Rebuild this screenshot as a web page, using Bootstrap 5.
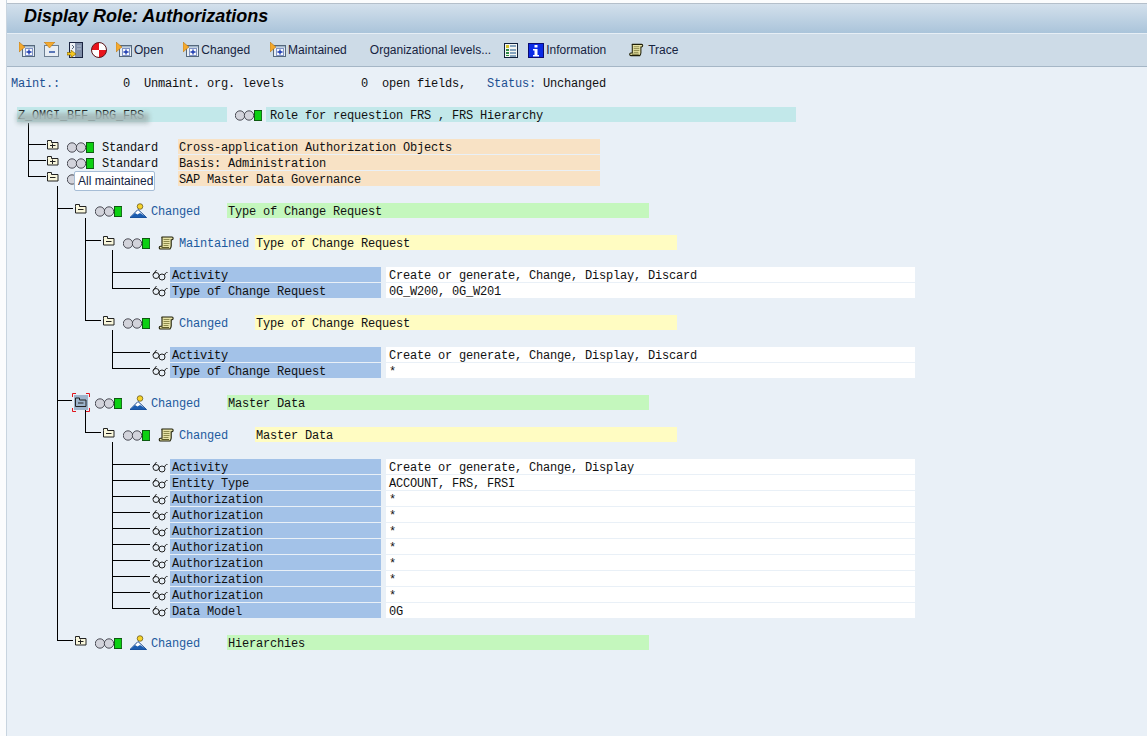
<!DOCTYPE html>
<html lang="en">
<head>
    <meta charset="UTF-8">
    <title>Display Role: Authorizations</title>
    <link href="https://cdn.jsdelivr.net/npm/bootstrap@5.3.0/dist/css/bootstrap.min.css" rel="stylesheet">
    <style>
        html, body { height: 100%; }
        body {
            background: linear-gradient(90deg, #fbfcfd 6px, #c8d4df 6px, #c8d4df 7px, #e9f0f7 7px);
            overflow: hidden;
            color: #111;
        }
        .sap-top { height: 3px; margin-left: 7px; border-bottom: 1px solid #b4bfca; background: #fbfcfd; box-sizing: content-box; }
        .sap-title {
            margin-left: 7px; height: 30px; padding-left: 17px;
            background: linear-gradient(180deg, #d3e0ec 0%, #aac4da 100%);
            border-bottom: 1px solid #e6eef5;
            font: italic bold 18px "Liberation Sans", Arial, sans-serif;
            color: #000; line-height: 25px;
        }
        .sap-toolbar {
            margin-left: 7px; height: 33px; padding-left: 12px;
            background: #cddbe7; border-bottom: 1px solid #a5b6c6;
            font: 12px "Liberation Sans", Arial, sans-serif; color: #16233f;
        }
        .tb-item { display: flex; align-items: center; }
        .tb-23 { margin-left: 23px; }
        .tb-20 { margin-left: 20px; }
        .tb-13 { margin-left: 13px; }
        .tb-10 { margin-left: 10px; }
        .tb-9 { margin-left: 9px; }
        .tb-8 { margin-left: 8px; }
        .tb-7 { margin-left: 7px; }
        .tb-text { margin-left: 1px; }
        .tb-text-wide { margin-left: 2px; }
        .sap-list, .sap-tree { font: 12px/19px "Liberation Mono", "Courier New", monospace; letter-spacing: -.2px; color: #111; }
        .sap-status { height: 16px; margin: 8px 0 16px 11px; white-space: pre; }
        .txt-blue { color: #1d4f91; }
        .sap-tree { position: relative; }
        .tree-lines { position: absolute; left: 0; top: 0; pointer-events: none; }
        .tree-row { display: flex; height: 16px; position: relative; white-space: pre; }
        .tree-gap { height: 16px; }
        .ind-root { margin-left: 17px; }
        .ind-0 { margin-left: 46px; }
        .ind-1 { margin-left: 74px; }
        .ind-2 { margin-left: 102px; }
        .ind-3 { margin-left: 150px; }
        .cell-folder { width: 21px; height: 15px; position: relative; flex: none; }
        .cell-folder svg { display: block; }
        .cell-lights { width: 27px; flex: none; margin-top: 3px; }
        .cell-node { width: 17px; margin-left: 8px; flex: none; }
        .cell-scroll { width: 17px; margin-left: 8px; margin-top: 1px; flex: none; }
        .cell-label { width: 76px; margin-left: 4px; flex: none; }
        .cell-label-wide { width: 76px; margin-left: 8px; flex: none; }
        .cell-glass { width: 20px; margin-top: 2px; flex: none; }
        .bar-desc { width: 422px; height: 15px; flex: none; padding-left: 1px; line-height: 19px; overflow: hidden; }
        .bar-root { width: 210px; height: 15px; flex: none; padding-left: 1px; background: #c2e8ea; overflow: hidden; }
        .bar-role { width: 530px; height: 15px; margin-left: 4px; padding-left: 4px; background: #c2e8ea; overflow: hidden; }
        .lights-root { margin-left: 8px; margin-top: 3px; flex: none; }
        .bg-peach { background: #f8e2c5; }
        .bg-lime { background: #c4f7bd; }
        .bg-cream { background: #fffcc2; }
        .fld-name { width: 211px; height: 15px; flex: none; padding-left: 2px; background: #a3c2e8; overflow: hidden; }
        .fld-value { width: 529px; height: 15px; flex: none; margin-left: 5px; padding-left: 3px; background: #fff; overflow: hidden; }
        .node-blue { color: #1d5a9e; }
        .folder-sel { position: absolute; left: -2px; top: -2px; }
        .blur-band {
            position: absolute; left: 17px; top: 6px; width: 132px; height: 10px;
            background: #a5b8b8; filter: blur(2.5px); opacity: .95;
        }
        .sap-tip {
            position: absolute; left: 74px; top: 64px; height: 20px; padding: 0 1px 0 3px;
            background: #fff; border: 1px solid #a6bdd6; border-radius: 2px;
            font: 12px/18px "Liberation Sans", Arial, sans-serif; letter-spacing: 0; color: #16233f;
        }
    </style>
</head>
<body>

<svg width="0" height="0" class="position-absolute">
    <defs>
        <symbol id="i-open" viewBox="0 0 17 16">
            <rect x="3.500" y="3.500" width="12" height="11" fill="#e8eef4" stroke="#55687c"/>
            <rect x="4" y="4" width="11" height="1.500" fill="#9fb4c9"/>
            <rect x="6.500" y="6.500" width="7" height="7" fill="#f6f8fb" stroke="#7f93c4"/>
            <path d="M7.500 10h5M10 7.500v5" stroke="#1434b0" stroke-width="1.300"/>
            <path d="M0 0l6 5-6 5z" fill="#f4a92e" stroke="#a86a10" stroke-width=".5"/>
        </symbol>
        <symbol id="i-close" viewBox="0 0 17 16">
            <rect x="1.500" y="3.500" width="14" height="11" fill="#e8eef4" stroke="#6d7f92"/>
            <path d="M6 10h6" stroke="#3558a8" stroke-width="1.600"/>
            <path d="M1 0h11l-5.500 6z" fill="#f4a92e" stroke="#a86a10" stroke-width=".5"/>
        </symbol>
        <symbol id="i-table" viewBox="0 0 16 16">
            <rect x="2.500" y=".5" width="13" height="15" fill="#7f8ea8" stroke="#1a2440"/>
            <rect x="3" y="1" width="5" height="14" fill="#eef2f6"/>
            <path d="M5 3l2 2-2 2" fill="none" stroke="#55687c"/>
            <path d="M10 4h4M10 7h4" stroke="#b6c2d4"/>
            <path d="M0 10.500h4V8l5 4-5 3.500V13H0z" fill="#f7c81e" stroke="#6b5200" stroke-width=".6"/>
        </symbol>
        <symbol id="i-ball" viewBox="0 0 16 16">
            <circle cx="8" cy="8" r="7.500" fill="#e8141c"/>
            <path d="M8 .5A7.500 7.500 0 0 1 15.500 8H8zM8 8H.5A7.500 7.500 0 0 0 8 15.500z" fill="#fff"/>
            <circle cx="8" cy="8" r="7.500" fill="none" stroke="#5a1a1e"/>
        </symbol>
        <symbol id="i-list" viewBox="0 0 14 15">
            <rect x=".5" y=".5" width="13" height="14" fill="#f4f7f2" stroke="#10203a"/>
            <path d="M2 2h3v3H2z" fill="#d5c32a"/><path d="M2 6h3v2H2zM2 9h3v2H2zM2 12h3v1H2z" fill="#2f8a45"/>
            <path d="M6 3h6M6 7h6M6 10h6M6 13h6" stroke="#14508a"/>
        </symbol>
        <symbol id="i-info" viewBox="0 0 16 15">
            <rect width="16" height="15" fill="#0c0c70"/>
            <rect x="1" y="1" width="14" height="13" fill="#0a2ae6"/>
            <path d="M6.500 2h3v2.500h-3zM5 6h4.500v6H11v1.500H5V12h1.500V7.500H5z" fill="#fff"/>
        </symbol>
        <symbol id="i-scroll" viewBox="0 0 16 14">
            <path d="M3.500 1h10c1.500 0 1.500 2.500 0 2.800h-.8V10c0 1-.5 2-1.200 3H2c-1.700 0-1.700-2.800 0-2.800h1.500V2.500C3.500 1.500 3 1 3.500 1z" fill="#e7e3a6" stroke="#1f1f08" stroke-width="1.100"/>
            <path d="M5 3.500h6M5 5.500h6M5 7.500h6M5 9.500h5" stroke="#8c8a4c"/>
            <path d="M3 11.500h7.500" stroke="#5e5c28"/>
        </symbol>
        <symbol id="i-folder-plus" viewBox="0 0 13 11">
            <path d="M1.500 3.500V1.500h4v2h6.500v6.500H1.500z" fill="#f9f7dc" stroke="#222"/>
            <path d="M4 6.500h5.500M6.500 4.500v4.500" stroke="#222"/>
        </symbol>
        <symbol id="i-folder-minus" viewBox="0 0 13 11">
            <path d="M1.500 3.500V1.500h4v2h6.500v6.500H1.500z" fill="#f9f7dc" stroke="#222"/>
            <path d="M4 6.500h5.500" stroke="#222"/>
        </symbol>
        <symbol id="i-lights" viewBox="0 0 27 11">
            <circle cx="5" cy="5.500" r="4.700" fill="#d2d3db" stroke="#3a3b44" stroke-width=".9"/>
            <circle cx="14" cy="5.500" r="4.700" fill="#d2d3db" stroke="#3a3b44" stroke-width=".9"/>
            <rect x="19.500" y=".5" width="7.200" height="10" fill="#0cd012" stroke="#0c5a10"/>
        </symbol>
        <symbol id="i-peak" viewBox="0 0 17 15">
            <circle cx="10" cy="3.500" r="2.800" fill="#f6d32c" stroke="#5a4a10" stroke-width=".7"/>
            <path d="M0 14.500L8 6.500l8.500 8z" fill="#fff" stroke="#16468c"/>
            <path d="M0 14.500L5 10l2.500 1.500L10 10l7 4.500z" fill="#1a5cb0"/>
        </symbol>
        <symbol id="i-glass" viewBox="0 0 17 12">
            <circle cx="4.500" cy="6.500" r="3" fill="none" stroke="#222"/>
            <circle cx="10.500" cy="8" r="3" fill="none" stroke="#222"/>
            <path d="M1.500 5.500L5 1M13 6.500c.5-2 1.500-3.500 3-3" fill="none" stroke="#222"/>
        </symbol>
    </defs>
</svg>

<div class="sap-top"></div>
<div class="sap-title">Display Role: Authorizations</div>
<div class="sap-toolbar d-flex align-items-center">
    <svg width="17" height="16"><use href="#i-open"/></svg>
    <svg width="17" height="16" class="tb-7"><use href="#i-close"/></svg>
    <svg width="16" height="16" class="tb-7"><use href="#i-table"/></svg>
    <svg width="16" height="16" class="tb-8"><use href="#i-ball"/></svg>
    <div class="tb-item tb-9"><svg width="17" height="16"><use href="#i-open"/></svg><span class="tb-text">Open</span></div>
    <div class="tb-item tb-20"><svg width="17" height="16"><use href="#i-open"/></svg><span class="tb-text">Changed</span></div>
    <div class="tb-item tb-20"><svg width="17" height="16"><use href="#i-open"/></svg><span class="tb-text">Maintained</span></div>
    <div class="tb-item tb-23">Organizational levels...</div>
    <svg width="14" height="15" class="tb-13"><use href="#i-list"/></svg>
    <div class="tb-item tb-10"><svg width="16" height="15"><use href="#i-info"/></svg><span class="tb-text-wide">Information</span></div>
    <div class="tb-item tb-23"><svg width="15" height="14"><use href="#i-scroll"/></svg><span class="ms-1">Trace</span></div>
</div>

<div class="sap-list sap-status"><span class="txt-blue">Maint.:</span>         0  Unmaint. org. levels           0  open fields,   <span class="txt-blue">Status:</span> Unchanged</div>

<div class="sap-tree">
    <svg class="tree-lines" width="1147" height="560" viewBox="0 107 1147 560" fill="none" stroke="#000" shape-rendering="crispEdges">
        <path d="M28.500 123V176.500M28.500 144.500H46M28.500 160.500H46M28.500 176.500H46"/>
        <path d="M57.500 186V640.500M57.500 208.500H73M57.500 400.500H72M57.500 640.500H73"/>
        <path d="M85.500 218V320.500M85.500 240.500H101M85.500 320.500H101M85.500 410V432.500H101"/>
        <path d="M112.500 250V288.500M112.500 272.500H150M112.500 288.500H150"/>
        <path d="M112.500 330V368.500M112.500 352.500H150M112.500 368.500H150"/>
        <path d="M112.500 442V608.500M112.500 464.500H150M112.500 480.500H150M112.500 496.500H150M112.500 512.500H150M112.500 528.500H150M112.500 544.500H150M112.500 560.500H150M112.500 576.500H150M112.500 592.500H150M112.500 608.500H150"/>
    </svg>

    <div class="tree-row ind-root">
        <div class="bar-root">Z_OMGI_BFF_DRG_FRS</div>
        <svg width="27" height="11" class="lights-root"><use href="#i-lights"/></svg>
        <div class="bar-role">Role for requestion FRS , FRS Hierarchy</div>
    </div>
    <div class="blur-band"></div>
    <div class="tree-gap"></div>

    <div class="tree-row ind-0">
        <div class="cell-folder"><svg width="13" height="11"><use href="#i-folder-plus"/></svg></div>
        <svg width="27" height="11" class="cell-lights"><use href="#i-lights"/></svg>
        <div class="cell-label-wide">Standard</div>
        <div class="bar-desc bg-peach">Cross-application Authorization Objects</div>
    </div>
    <div class="tree-row ind-0">
        <div class="cell-folder"><svg width="13" height="11"><use href="#i-folder-plus"/></svg></div>
        <svg width="27" height="11" class="cell-lights"><use href="#i-lights"/></svg>
        <div class="cell-label-wide">Standard</div>
        <div class="bar-desc bg-peach">Basis: Administration</div>
    </div>
    <div class="tree-row ind-0">
        <div class="cell-folder"><svg width="13" height="11"><use href="#i-folder-minus"/></svg></div>
        <svg width="27" height="11" class="cell-lights"><use href="#i-lights"/></svg>
        <div class="cell-label-wide"></div>
        <div class="bar-desc bg-peach">SAP Master Data Governance</div>
    </div>
    <div class="tree-gap"></div>

    <div class="tree-row ind-1">
        <div class="cell-folder"><svg width="13" height="11"><use href="#i-folder-minus"/></svg></div>
        <svg width="27" height="11" class="cell-lights"><use href="#i-lights"/></svg>
        <svg width="17" height="15" class="cell-node"><use href="#i-peak"/></svg>
        <div class="cell-label node-blue">Changed</div>
        <div class="bar-desc bg-lime">Type of Change Request</div>
    </div>
    <div class="tree-gap"></div>

    <div class="tree-row ind-2">
        <div class="cell-folder"><svg width="13" height="11"><use href="#i-folder-minus"/></svg></div>
        <svg width="27" height="11" class="cell-lights"><use href="#i-lights"/></svg>
        <svg width="16" height="14" class="cell-scroll"><use href="#i-scroll"/></svg>
        <div class="cell-label node-blue">Maintained</div>
        <div class="bar-desc bg-cream">Type of Change Request</div>
    </div>
    <div class="tree-gap"></div>

    <div class="tree-row ind-3"><svg width="17" height="12" class="cell-glass"><use href="#i-glass"/></svg><div class="fld-name">Activity</div><div class="fld-value">Create or generate, Change, Display, Discard</div></div>
    <div class="tree-row ind-3"><svg width="17" height="12" class="cell-glass"><use href="#i-glass"/></svg><div class="fld-name">Type of Change Request</div><div class="fld-value">0G_W200, 0G_W201</div></div>
    <div class="tree-gap"></div>

    <div class="tree-row ind-2">
        <div class="cell-folder"><svg width="13" height="11"><use href="#i-folder-minus"/></svg></div>
        <svg width="27" height="11" class="cell-lights"><use href="#i-lights"/></svg>
        <svg width="16" height="14" class="cell-scroll"><use href="#i-scroll"/></svg>
        <div class="cell-label node-blue">Changed</div>
        <div class="bar-desc bg-cream">Type of Change Request</div>
    </div>
    <div class="tree-gap"></div>

    <div class="tree-row ind-3"><svg width="17" height="12" class="cell-glass"><use href="#i-glass"/></svg><div class="fld-name">Activity</div><div class="fld-value">Create or generate, Change, Display, Discard</div></div>
    <div class="tree-row ind-3"><svg width="17" height="12" class="cell-glass"><use href="#i-glass"/></svg><div class="fld-name">Type of Change Request</div><div class="fld-value">*</div></div>
    <div class="tree-gap"></div>

    <div class="tree-row ind-1">
        <div class="cell-folder">
            <svg width="18" height="19" class="folder-sel" fill="none">
                <rect x="2" y="2" width="14" height="15" fill="#9db4cc"/>
                <path d="M.5 4V.5H4M14 .5h3.500V4M.5 15v3.500H4M14 18.500h3.500V15" stroke="#e0141c"/>
                <path d="M3.500 7V5h4v2h6.500v6.500H3.500zM6 10h5.500" stroke="#222"/>
            </svg>
        </div>
        <svg width="27" height="11" class="cell-lights"><use href="#i-lights"/></svg>
        <svg width="17" height="15" class="cell-node"><use href="#i-peak"/></svg>
        <div class="cell-label node-blue">Changed</div>
        <div class="bar-desc bg-lime">Master Data</div>
    </div>
    <div class="tree-gap"></div>

    <div class="tree-row ind-2">
        <div class="cell-folder"><svg width="13" height="11"><use href="#i-folder-minus"/></svg></div>
        <svg width="27" height="11" class="cell-lights"><use href="#i-lights"/></svg>
        <svg width="16" height="14" class="cell-scroll"><use href="#i-scroll"/></svg>
        <div class="cell-label node-blue">Changed</div>
        <div class="bar-desc bg-cream">Master Data</div>
    </div>
    <div class="tree-gap"></div>

    <div class="tree-row ind-3"><svg width="17" height="12" class="cell-glass"><use href="#i-glass"/></svg><div class="fld-name">Activity</div><div class="fld-value">Create or generate, Change, Display</div></div>
    <div class="tree-row ind-3"><svg width="17" height="12" class="cell-glass"><use href="#i-glass"/></svg><div class="fld-name">Entity Type</div><div class="fld-value">ACCOUNT, FRS, FRSI</div></div>
    <div class="tree-row ind-3"><svg width="17" height="12" class="cell-glass"><use href="#i-glass"/></svg><div class="fld-name">Authorization</div><div class="fld-value">*</div></div>
    <div class="tree-row ind-3"><svg width="17" height="12" class="cell-glass"><use href="#i-glass"/></svg><div class="fld-name">Authorization</div><div class="fld-value">*</div></div>
    <div class="tree-row ind-3"><svg width="17" height="12" class="cell-glass"><use href="#i-glass"/></svg><div class="fld-name">Authorization</div><div class="fld-value">*</div></div>
    <div class="tree-row ind-3"><svg width="17" height="12" class="cell-glass"><use href="#i-glass"/></svg><div class="fld-name">Authorization</div><div class="fld-value">*</div></div>
    <div class="tree-row ind-3"><svg width="17" height="12" class="cell-glass"><use href="#i-glass"/></svg><div class="fld-name">Authorization</div><div class="fld-value">*</div></div>
    <div class="tree-row ind-3"><svg width="17" height="12" class="cell-glass"><use href="#i-glass"/></svg><div class="fld-name">Authorization</div><div class="fld-value">*</div></div>
    <div class="tree-row ind-3"><svg width="17" height="12" class="cell-glass"><use href="#i-glass"/></svg><div class="fld-name">Authorization</div><div class="fld-value">*</div></div>
    <div class="tree-row ind-3"><svg width="17" height="12" class="cell-glass"><use href="#i-glass"/></svg><div class="fld-name">Data Model</div><div class="fld-value">0G</div></div>
    <div class="tree-gap"></div>

    <div class="tree-row ind-1">
        <div class="cell-folder"><svg width="13" height="11"><use href="#i-folder-plus"/></svg></div>
        <svg width="27" height="11" class="cell-lights"><use href="#i-lights"/></svg>
        <svg width="17" height="15" class="cell-node"><use href="#i-peak"/></svg>
        <div class="cell-label node-blue">Changed</div>
        <div class="bar-desc bg-lime">Hierarchies</div>
    </div>

    <div class="sap-tip">All maintained</div>
</div>

<script src="https://cdn.jsdelivr.net/npm/bootstrap@5.3.0/dist/js/bootstrap.bundle.min.js"></script>
</body>
</html>
